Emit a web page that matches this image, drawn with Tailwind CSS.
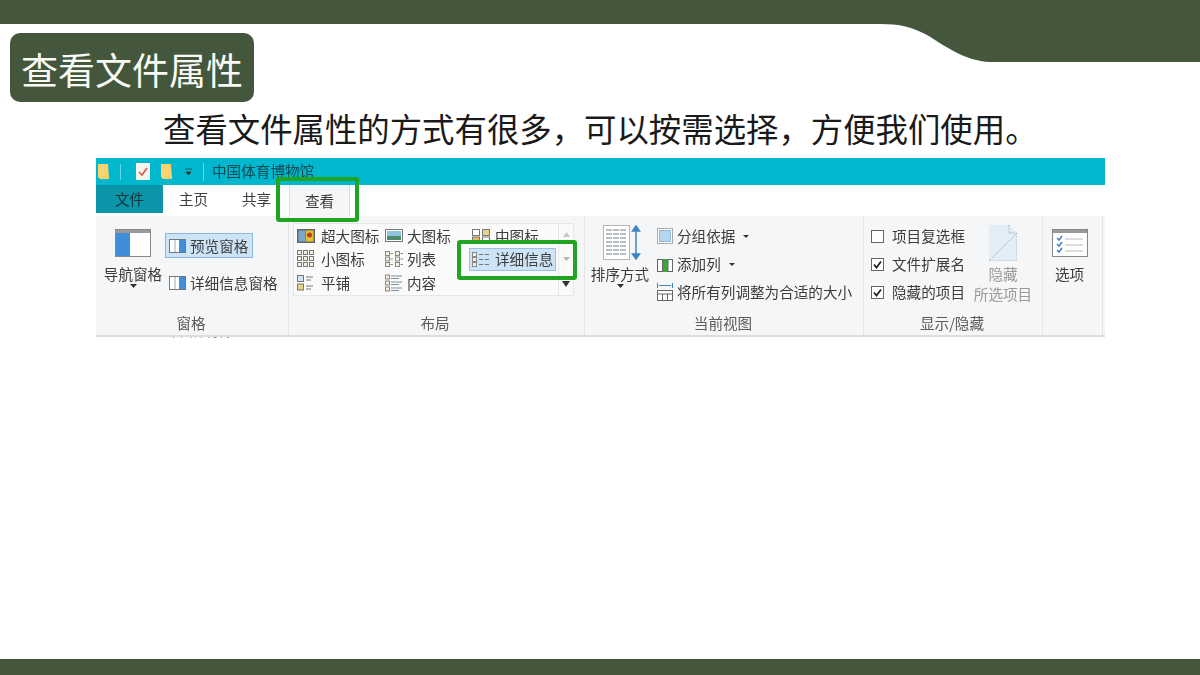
<!DOCTYPE html>
<html lang="zh-CN">
<head>
    <meta charset="UTF-8">
    <title>查看文件属性</title>
    <script src="https://cdn.jsdelivr.net/npm/@tailwindcss/browser@4"></script>
</head>
<body class="w-[1200px] h-[675px] overflow-hidden bg-white relative font-['Noto_Sans_CJK_SC',sans-serif] flex flex-col">

    <!-- top band -->
    <svg class="absolute top-0 left-0" width="1200" height="64" viewBox="0 0 1200 64">
        <path d="M0 0H1200V62H990C965 61 945 46 927 35C912 27 900 24 880 24H0Z" fill="#44573d"/>
    </svg>

    <!-- title -->
    <div class="relative mt-[33px] ml-[10px] w-[244px] h-[69px] bg-[#44573d] rounded-[10px] flex items-center justify-center pt-[3px] text-[#f8f8f4] text-[37px] leading-none">查看文件属性</div>

    <p class="mt-[6px] ml-[163px] text-[32.4px] leading-[40px] text-[#1a1a1a] whitespace-nowrap">查看文件属性的方式有很多，可以按需选择，方便我们使用。</p>

    <!-- explorer ribbon -->
    <div class="relative ml-[96px] mt-[10px] w-[1009px] h-[182px] text-[14.6px] leading-[20px] text-[#3c3c3c] whitespace-nowrap overflow-hidden blur-[0.4px]">
        <!-- title bar -->
        <div class="h-[27px] bg-[#00b7ce] flex items-center">
            <svg class="ml-[2px]" width="12" height="16" viewBox="0 0 12 16"><path d="M0 0H10L11 15H2L0 13Z" fill="#f8d36e"/></svg>
            <div class="ml-[10px] w-px h-[16px] bg-white/40"></div>
            <svg class="ml-[15px]" width="14" height="17" viewBox="0 0 14 17"><rect width="14" height="17" fill="#f5f5f0"/><path d="M3 9L6 12L11 5" fill="none" stroke="#d9534f" stroke-width="1.5"/></svg>
            <svg class="ml-[11px]" width="12" height="16" viewBox="0 0 12 16"><path d="M0 0H10L11 15H2L0 13Z" fill="#f8d36e"/></svg>
            <svg class="ml-[12px]" width="8" height="8" viewBox="0 0 8 8"><path d="M0 1H7M1 4H6L3.5 7Z" fill="#333" stroke="#333" stroke-width="0.7"/></svg>
            <div class="ml-[10px] w-px h-[18px] bg-white/40"></div>
            <span class="ml-[8px] -mt-[1px] text-[#0c4a55]">中国体育博物馆</span>
        </div>
        <!-- tabs -->
        <div class="h-[28px] flex items-stretch bg-white">
            <div class="w-[67px] bg-[#0a95a8] flex items-center justify-center text-[#12343a]">文件</div>
            <div class="ml-[16px] w-[30px] flex items-center">主页</div>
            <div class="ml-[33px] w-[30px] flex items-center">共享</div>
            <div class="ml-[17px] w-[61px] h-[31px] bg-[#f5f6f7] border-x border-[#dcdcdc] flex items-center justify-center">查看</div>
        </div>
        <!-- ribbon body -->
        <div class="relative z-10 mt-[3px] h-[121px] bg-[#f5f6f7] border-b-2 border-[#dddddd] flex items-stretch">

            <!-- panes -->
            <section class="w-[193px] border-r border-[#e4e5e6] flex flex-col">
                <div class="h-[97px] flex">
                    <div class="w-[68px] ml-[3px] flex flex-col items-center pt-[13px]">
                        <svg width="36" height="28" viewBox="0 0 36 28"><rect x="0.5" y="0.5" width="35" height="27" fill="#fff" stroke="#888"/><rect x="1" y="1" width="34" height="3" fill="#999"/><rect x="1" y="4" width="14" height="23" fill="#3f8fd8"/></svg>
                        <span class="mt-[7px]">导航窗格</span>
                        <svg width="7" height="4" viewBox="0 0 7 4"><path d="M0 0H7L3.5 4Z" fill="#333"/></svg>
                    </div>
                    <div class="ml-[-2px] flex flex-col pt-[17px]">
                        <div class="w-[88px] h-[25px] bg-[#cde4f7] border border-[#8db6e0] flex items-center pl-[3px] gap-[4px]">
                            <svg width="17" height="14" viewBox="0 0 17 14"><rect x="0.5" y="0.5" width="16" height="13" fill="#fff" stroke="#777"/><path d="M6 1V13" stroke="#9ab"/><rect x="10" y="1" width="6" height="12" fill="#3f8fd8"/></svg>
                            <span>预览窗格</span>
                        </div>
                        <div class="mt-[15px] pl-[4px] flex items-center gap-[4px]">
                            <svg width="17" height="14" viewBox="0 0 17 14"><rect x="0.5" y="0.5" width="16" height="13" fill="#fff" stroke="#777"/><path d="M6 1V13" stroke="#9ab"/><rect x="10" y="1" width="6" height="12" fill="#3f8fd8"/></svg>
                            <span>详细信息窗格</span>
                        </div>
                    </div>
                </div>
                <div class="text-center text-[#5a5a5a] pr-[2px]">窗格</div>
            </section>

            <!-- layout -->
            <section class="w-[296px] border-r border-[#e4e5e6] flex flex-col">
                <div class="mt-[7px] ml-[4px] w-[281px] h-[73px] flex bg-[#fafafa] border border-[#e6e6e6]">
                    <div class="w-[264px] grid grid-cols-[88px_87px_87px] grid-rows-3 pl-[3px]">
                        <div class="flex items-center gap-[6px]">
                            <svg width="18" height="14" viewBox="0 0 18 14"><rect width="18" height="14" fill="#666"/><rect x="1.5" y="1.5" width="7" height="11" fill="#7aa7d0"/><rect x="9" y="1.5" width="7.5" height="11" fill="#e6c22c"/><circle cx="12.5" cy="6" r="2.5" fill="#c0392b"/></svg>
                            <span>超大图标</span>
                        </div>
                        <div class="flex items-center gap-[4px]">
                            <svg width="18" height="13" viewBox="0 0 18 13"><rect x="0.5" y="0.5" width="17" height="12" fill="#fff" stroke="#777"/><rect x="2" y="2" width="14" height="5" fill="#8fc3e0"/><rect x="2" y="7" width="14" height="4" fill="#4d8a6a"/></svg>
                            <span>大图标</span>
                        </div>
                        <div class="flex items-center gap-[5px]">
                            <svg width="18" height="14" viewBox="0 0 18 14"><rect x="0.5" y="0.5" width="7" height="6" fill="#fff" stroke="#777"/><rect x="10.5" y="0.5" width="7" height="6" fill="#e6d48a" stroke="#777"/><rect x="0.5" y="8" width="7" height="6" fill="#e6b85a" stroke="#777"/><rect x="10.5" y="8" width="7" height="6" fill="#fff" stroke="#777"/></svg>
                            <span>中图标</span>
                        </div>
                        <div class="flex items-center gap-[6px]">
                            <svg width="18" height="18" viewBox="0 0 18 18" fill="#f4efe0" stroke="#777"><rect x="0.5" y="0.5" width="4" height="4"/><rect x="6.5" y="0.5" width="4" height="4"/><rect x="12.5" y="0.5" width="4" height="4"/><rect x="0.5" y="6.5" width="4" height="4"/><rect x="6.5" y="6.5" width="4" height="4"/><rect x="12.5" y="6.5" width="4" height="4"/><rect x="0.5" y="12.5" width="4" height="4"/><rect x="6.5" y="12.5" width="4" height="4"/><rect x="12.5" y="12.5" width="4" height="4"/></svg>
                            <span>小图标</span>
                        </div>
                        <div class="flex items-center gap-[4px]">
                            <svg width="18" height="16" viewBox="0 0 18 16" fill="#f4efe0" stroke="#888"><rect x="0.5" y="0.5" width="4" height="4"/><rect x="0.5" y="6" width="4" height="4"/><rect x="0.5" y="11.5" width="4" height="4"/><rect x="10.5" y="0.5" width="4" height="4"/><rect x="10.5" y="6" width="4" height="4"/><rect x="10.5" y="11.5" width="4" height="4"/><path d="M5.5 2.5H8M5.5 8H8M5.5 13.5H8M15.5 2.5H18M15.5 8H18M15.5 13.5H18"/></svg>
                            <span>列表</span>
                        </div>
                        <div class="flex items-center gap-[5px] self-center w-[87px] h-[23px] -ml-[3px] pl-[2px] bg-[#cde4f7] border border-[#9cc0e4]">
                            <svg width="18" height="15" viewBox="0 0 18 15" fill="#f4efe0" stroke="#888"><rect x="0.5" y="0.5" width="4" height="4"/><rect x="0.5" y="5.5" width="4" height="4"/><rect x="0.5" y="10.5" width="4" height="4"/><path d="M7 2.5H11M12.5 2.5H17M7 7.5H11M12.5 7.5H17M7 12.5H11M12.5 12.5H17" stroke="#777"/></svg>
                            <span>详细信息</span>
                        </div>
                        <div class="flex items-center gap-[6px]">
                            <svg width="18" height="16" viewBox="0 0 18 16" fill="none" stroke="#777"><rect x="0.5" y="0.5" width="6" height="6" fill="#cfe3f3"/><rect x="0.5" y="9" width="6" height="6" fill="#e6d48a"/><path d="M9 2H16M9 5H14M9 11H16M9 14H14"/></svg>
                            <span>平铺</span>
                        </div>
                        <div class="flex items-center gap-[4px]">
                            <svg width="18" height="18" viewBox="0 0 18 18" fill="#f4efe0" stroke="#888"><rect x="0.5" y="1" width="4" height="4"/><rect x="0.5" y="7" width="4" height="4"/><rect x="0.5" y="13" width="4" height="4"/><path d="M6 2H17M6 4.5H14M6 8H17M6 10.5H14M6 14H17M6 16.5H14" stroke="#7d8fa0"/></svg>
                            <span>内容</span>
                        </div>
                    </div>
                    <div class="w-[16px] ml-auto border-l border-[#e6e6e6] flex flex-col items-center justify-between py-[8px]">
                        <svg width="7" height="5" viewBox="0 0 7 5"><path d="M0 5H7L3.5 0Z" fill="#c8c8c8"/></svg>
                        <svg width="7" height="4" viewBox="0 0 7 4"><path d="M0 0H7L3.5 4Z" fill="#b5b5b5"/></svg>
                        <svg width="8" height="6" viewBox="0 0 8 6"><path d="M0 0H8L4 6Z" fill="#333"/></svg>
                    </div>
                </div>
                <div class="mt-[17px] text-center text-[#5a5a5a] pr-[3px]">布局</div>
            </section>

            <!-- current view -->
            <section class="w-[279px] border-r border-[#e4e5e6] flex flex-col">
                <div class="h-[97px] flex">
                    <div class="w-[66px] ml-[2px] flex flex-col items-center pt-[9px]">
                        <svg class="ml-[4px]" width="38" height="35" viewBox="0 0 38 35"><rect x="0.5" y="0.5" width="26" height="34" fill="#fff" stroke="#b5b5b5"/><path d="M3 5H24M3 9H24M3 13H24M3 17H24M3 21H24M3 25H24M3 29H24" stroke="#b9bfc4" stroke-width="2" stroke-dasharray="6 1"/><path d="M33 2V33M29.5 6L33 1L36.5 6ZM29.5 29L33 34L36.5 29Z" fill="#3d84c4" stroke="#3d84c4" stroke-width="1.5"/></svg>
                        <span class="mt-[4px]">排序方式</span>
                        <svg width="7" height="4" viewBox="0 0 7 4"><path d="M0 0H7L3.5 4Z" fill="#333"/></svg>
                    </div>
                    <div class="ml-[4px] flex flex-col pt-[10px] gap-[8px]">
                        <div class="flex items-center gap-[4px]">
                            <svg width="16" height="16" viewBox="0 0 16 16"><rect x="0.5" y="0.5" width="15" height="15" fill="#fff" stroke="#aaa"/><rect x="2.5" y="2.5" width="11" height="11" fill="#b5d6f0" stroke="#8fb8d8"/></svg>
                            <span>分组依据</span>
                            <svg class="ml-[4px]" width="6" height="3" viewBox="0 0 6 3"><path d="M0 0H6L3 3Z" fill="#333"/></svg>
                        </div>
                        <div class="flex items-center gap-[4px]">
                            <svg width="16" height="16" viewBox="0 0 16 16"><rect x="0.5" y="3.5" width="15" height="12" fill="#fff" stroke="#666"/><rect x="6" y="3" width="5" height="13" fill="#3aa63a"/><path d="M5.5 4V15M11 4V15" stroke="#666"/></svg>
                            <span>添加列</span>
                            <svg class="ml-[4px]" width="6" height="3" viewBox="0 0 6 3"><path d="M0 0H6L3 3Z" fill="#333"/></svg>
                        </div>
                        <div class="flex items-center gap-[4px]">
                            <svg width="16" height="18" viewBox="0 0 16 18" fill="none" stroke="#666"><path d="M0.5 0V5M15.5 0V5M2 2.5H14" stroke="#3d84c4"/><rect x="0.5" y="7.5" width="15" height="10" fill="#fff"/><path d="M0.5 11H15.5M5.5 11V17.5M10.5 11V17.5"/></svg>
                            <span>将所有列调整为合适的大小</span>
                        </div>
                    </div>
                </div>
                <div class="text-center text-[#5a5a5a] pr-[2px]">当前视图</div>
            </section>

            <!-- show / hide -->
            <section class="w-[179px] border-r border-[#e4e5e6] flex flex-col">
                <div class="h-[97px] flex">
                    <div class="ml-[7px] flex flex-col pt-[10px] gap-[8px]">
                        <div class="flex items-center gap-[8px]">
                            <div class="w-[13px] h-[13px] bg-white border border-[#666]"></div>
                            <span>项目复选框</span>
                        </div>
                        <div class="flex items-center gap-[8px]">
                            <svg width="13" height="13" viewBox="0 0 13 13"><rect x="0.5" y="0.5" width="12" height="12" fill="#fff" stroke="#666"/><path d="M3 6.5L5.5 9.5L10 3.5" fill="none" stroke="#222" stroke-width="1.8"/></svg>
                            <span>文件扩展名</span>
                        </div>
                        <div class="flex items-center gap-[8px]">
                            <svg width="13" height="13" viewBox="0 0 13 13"><rect x="0.5" y="0.5" width="12" height="12" fill="#fff" stroke="#666"/><path d="M3 6.5L5.5 9.5L10 3.5" fill="none" stroke="#222" stroke-width="1.8"/></svg>
                            <span>隐藏的项目</span>
                        </div>
                    </div>
                    <div class="ml-[9px] w-[58px] flex flex-col items-center pt-[9px] text-[#9a9a9a]">
                        <svg width="28" height="36" viewBox="0 0 28 36"><path d="M0 0H20L28 8V36H0Z" fill="#e3edf7"/><path d="M20 0V8H28M28 8V36H0L28 8" fill="none" stroke="#b5b5b5" stroke-dasharray="2 1"/></svg>
                        <span class="mt-[3px]">隐藏</span>
                        <span>所选项目</span>
                    </div>
                </div>
                <div class="text-center text-[#5a5a5a] pr-[2px]">显示/隐藏</div>
            </section>

            <!-- options -->
            <section class="w-[60px] border-r border-[#e4e5e6] flex flex-col items-center pt-[13px] pr-[6px]">
                <svg width="36" height="28" viewBox="0 0 36 28"><rect x="0.5" y="0.5" width="35" height="27" fill="#fff" stroke="#888"/><rect x="1" y="1" width="34" height="3" fill="#999"/><path d="M5 9L7 11L10 7M5 15L7 17L10 13M5 21L7 23L10 19" fill="none" stroke="#3d84c4" stroke-width="1.5"/><path d="M13 10H31M13 16H31M13 22H31" stroke="#bbb"/></svg>
                <span class="mt-[7px]">选项</span>
            </section>
        </div>
        <!-- file list row showing under the ribbon -->
        <div class="ml-[71px] mt-[-15px] text-[13px] leading-[18px] text-[#8a8a8a]">中国体育博</div>

        <!-- green highlight boxes -->
        <div class="absolute z-20 left-[180px] top-[19px] w-[83px] h-[45px] border-4 border-[#1fa51f] rounded-[3px]"></div>
        <div class="absolute z-20 left-[361px] top-[82px] w-[120px] h-[40px] border-4 border-[#1fa51f] rounded-[3px]"></div>
    </div>

    <!-- bottom band -->
    <div class="absolute bottom-0 left-0 w-full h-[16px] bg-[#44573d]"></div>
</body>
</html>
